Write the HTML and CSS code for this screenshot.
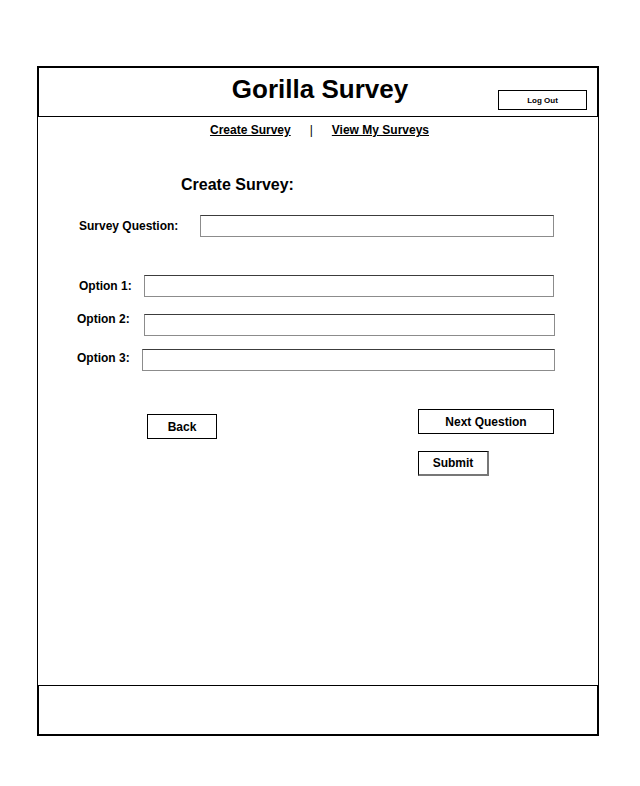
FILE: index.html
```html
<!DOCTYPE html>
<html>
<head>
    <title>Gorilla Survey</title>
    <link rel="stylesheet" href="styles.css">
</head>
<body>
<div class="frame">
    <div class="header">
        <div></div>
        <h1 class="title">Gorilla Survey</h1>
        <div class="header-right">
            <button class="btn-logout">Log Out</button>
        </div>
    </div>

    <div class="main">
        <div class="nav">
            <a href="#">Create Survey</a>
            <span>|</span>
            <a href="#">View My Surveys</a>
        </div>

        <h2 class="form-title">Create Survey:</h2>

        <div class="field field-question">
            <label>Survey Question:</label>
            <input type="text" />
        </div>
        <div class="field field-option1">
            <label>Option 1:</label>
            <input type="text" />
        </div>
        <div class="field field-option2">
            <label>Option 2:</label>
            <input type="text" />
        </div>
        <div class="field field-option3">
            <label>Option 3:</label>
            <input type="text" />
        </div>

        <div class="actions">
            <div class="actions-left">
                <button class="btn btn-back">Back</button>
            </div>
            <div class="actions-right">
                <button class="btn btn-next">Next Question</button>
                <button class="btn btn-submit">Submit</button>
            </div>
        </div>
    </div>

    <div class="footer"></div>
</div>
</body>
</html>
```

FILE: styles.css
```css
body {
    margin: 0;
    background-color: #fff;
    color: #000;
    font-family: "Liberation Sans", Arial, sans-serif;
}

.frame {
    width: 562px;
    margin: 66px 0 0 37px;
}

/* header */
.header {
    box-sizing: border-box;
    height: 51px;
    border: 2px solid #000;
    border-bottom-width: 1px;
    display: grid;
    grid-template-columns: 1fr auto 1fr;
}

.title {
    margin: 0;
    padding: 6px 0 0 4px;
    font-size: 26px;
    line-height: 30px;
    font-weight: bold;
}

.header-right {
    display: flex;
    justify-content: flex-end;
    align-items: flex-start;
    padding: 22px 10px 0 0;
}

.btn-logout {
    width: 89px;
    height: 20px;
    padding: 0;
    background-color: #fff;
    border: 1px solid #000;
    font-family: inherit;
    font-size: 8px;
    font-weight: bold;
    color: #000;
}

/* main area */
.main {
    box-sizing: border-box;
    height: 568px;
    border-left: 1px solid #000;
    border-right: 1px solid #000;
}

.nav {
    display: flex;
    justify-content: center;
    gap: 19px;
    padding: 6px 0 0 3px;
    font-size: 12px;
    line-height: 14px;
}

.nav a {
    color: #000;
    font-weight: bold;
    text-decoration: underline;
}

.form-title {
    margin: 39px 0 0 143px;
    font-size: 16px;
    line-height: 18px;
    font-weight: bold;
}

.field {
    display: flex;
    align-items: center;
    margin-left: 41px;
}

.field label {
    font-size: 12px;
    line-height: 14px;
    font-weight: bold;
    white-space: nowrap;
}

.field input {
    box-sizing: border-box;
    height: 22px;
    padding: 0;
    background-color: #fff;
    border: 1px solid #8c8c8c;
    border-top-color: #3c3c3c;
}

.field-question {
    margin-top: 21px;
}
.field-question label { width: 121px; }
.field-question input { width: 354px; }

.field-option1 {
    margin-top: 38px;
}
.field-option1 label { width: 65px; }
.field-option1 input { width: 410px; }

/* labels of option 2 and 3 sit near the top of their box */
.field-option2 {
    margin-top: 17px;
    margin-left: 39px;
    align-items: flex-start;
}
.field-option2 label { width: 67px; margin-top: -2px; }
.field-option2 input { width: 411px; }

.field-option3 {
    margin-top: 13px;
    margin-left: 39px;
    align-items: flex-start;
}
.field-option3 label { width: 65px; margin-top: 2px; }
.field-option3 input { width: 413px; }

/* buttons */
.actions {
    display: flex;
    margin-top: 38px;
}

.actions-left {
    box-sizing: border-box;
    width: 380px;
    padding: 5px 0 0 109px;
}

.actions-right {
    display: flex;
    flex-direction: column;
    align-items: flex-start;
    gap: 17px;
}

.btn {
    box-sizing: border-box;
    height: 25px;
    padding: 0;
    background-color: #fff;
    border: 1px solid #000;
    font-family: inherit;
    font-size: 12px;
    font-weight: bold;
    color: #000;
}

.btn-back { width: 70px; }
.btn-next { width: 136px; }

.btn-submit {
    width: 71px;
    border-right: 2px solid #777;
    border-bottom: 2px solid #777;
}

/* footer */
.footer {
    box-sizing: border-box;
    height: 51px;
    border: 2px solid #000;
    border-top-width: 1px;
}
```
